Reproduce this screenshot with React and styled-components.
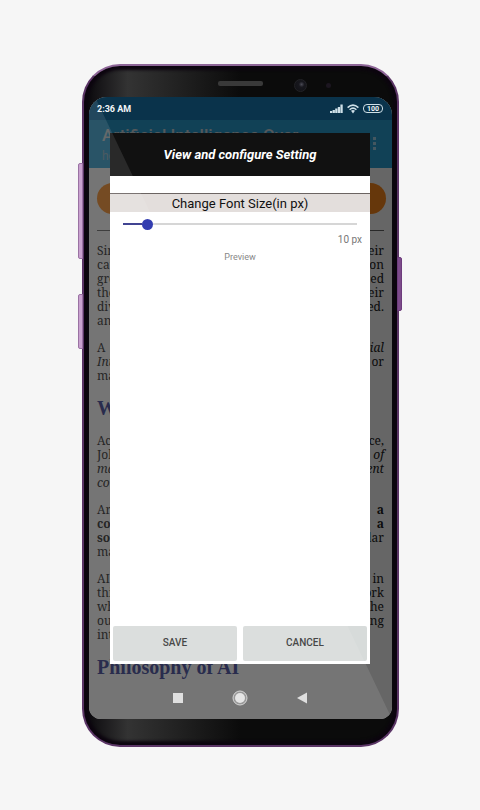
import { useState } from "react";
import styled, { createGlobalStyle, css } from "styled-components";

const GlobalStyle = createGlobalStyle`
  * {
    box-sizing: border-box;
  }

  body {
    margin: 0;
    background: #f6f6f6;
    font-family: Roboto, "Noto Sans", sans-serif;
  }

  button, input {
    font-family: inherit;
  }
`;

// 본문은 줄 단위로 양쪽 정렬
const intro = [
  "Since the invention of computers, their",
  "capability to perform various tasks on",
  "growing. Humans have developed",
  "the power of computer systems, their",
  "diverse working domains, increased.",
  "and reducing size with respect to time.",
];

const App = () => {
  const [fontSize, setFontSize] = useState(10);
  const [isOpen, setIsOpen] = useState(true);

  const onChangeSize = (e) => {
    setFontSize(Number(e.target.value));
  };
  const closeHandler = () => {
    setIsOpen(false);
  };

  return (
    <Page>
      <GlobalStyle />
      <Phone>
        <SideKey $side="left" $top={97} $height={96} />
        <SideKey $side="left" $top={228} $height={55} />
        <SideKey $side="right" $top={191} $height={54} />
        <Forehead>
          <Speaker />
          <Lens />
          <Sensor />
        </Forehead>

        <Screen>
          <StatusBar>
            <span>2:36 AM</span>
            <StatusIcons>
              <SignalIcon />
              <WifiIcon />
              <Battery>100</Battery>
            </StatusIcons>
          </StatusBar>

          <AppBar>
            <div>
              <AppTitle>Artificial Intelligence Over...</AppTitle>
              <AppSubtitle>home</AppSubtitle>
            </div>
            <MoreIcon />
          </AppBar>

          <Article>
            <Pill />
            <Divider />
            <Paragraph>
              {intro.map((line) => (
                <Line key={line}>{line}</Line>
              ))}
            </Paragraph>
            <Paragraph>
              <Line>A branch of Computer Science, <i>Artificial</i></Line>
              <Line><i>Intelligence</i> pursues making computers or</Line>
              <Line>machines as intelligent as human beings.</Line>
            </Paragraph>
            <Heading>What is Artificial Intelligence?</Heading>
            <Paragraph>
              <Line>According to father of the Intelligence,</Line>
              <Line>John McCarthy, <i>"The engineering of</i></Line>
              <Line><i>making machines, more intelligent</i></Line>
              <Line><i>computer programs".</i></Line>
            </Paragraph>
            <Paragraph>
              <Line>Artificial Intelligence is a way of <b>a</b></Line>
              <Line><b>computer, a controlled robot, a</b></Line>
              <Line><b>software</b> think intelligently, similar</Line>
              <Line>manner the intelligent humans think.</Line>
            </Paragraph>
            <Paragraph>
              <Line>AI is accomplished by studying brain in</Line>
              <Line>this how humans learn, decide, work</Line>
              <Line>while solving a problem, then using the</Line>
              <Line>outcomes of study as basis of developing</Line>
              <Line>intelligent software and systems.</Line>
            </Paragraph>
            <Heading>Philosophy of AI</Heading>
          </Article>

          {isOpen && (
            <Backdrop>
              <Dialog role="dialog" aria-labelledby="setting-title">
                <DialogTitle id="setting-title">View and configure Setting</DialogTitle>
                <SectionLabel htmlFor="font-size">Change Font Size(in px)</SectionLabel>
                <Range
                  id="font-size"
                  type="range"
                  min="8"
                  max="32"
                  value={fontSize}
                  onChange={onChangeSize}
                  style={{ "--fill": `${((fontSize - 8) / 24) * 100}%` }}
                />
                <SizeValue htmlFor="font-size">{fontSize} px</SizeValue>
                <Preview>Preview</Preview>
                <Actions>
                  <ActionButton onClick={closeHandler}>SAVE</ActionButton>
                  <ActionButton onClick={closeHandler}>CANCEL</ActionButton>
                </Actions>
              </Dialog>
            </Backdrop>
          )}

          <NavBar>
            <NavButton aria-label="Recent apps">
              <svg width="16" height="16"><rect x="3" y="3" width="10" height="10" fill="#dcdcdc" /></svg>
            </NavButton>
            <NavButton aria-label="Home">
              <svg width="16" height="16">
                <circle cx="8" cy="8" r="7" fill="#8d8d8d" stroke="#d0d0d0" />
                <circle cx="8" cy="8" r="5" fill="#e2e2e2" />
              </svg>
            </NavButton>
            <NavButton aria-label="Back">
              <svg width="16" height="16"><path d="M3 8 L13 2.500 V13.500 Z" fill="#dcdcdc" /></svg>
            </NavButton>
          </NavBar>
          <Glare />
        </Screen>
      </Phone>
    </Page>
  );
};

export default App;

const SignalIcon = () => (
  <svg width="13" height="10" viewBox="0 0 13 10" fill="#cfe0e8">
    <rect x="0" y="7" width="2.300" height="2" />
    <rect x="2.600" y="6" width="2.300" height="3" />
    <rect x="5.200" y="4.500" width="2.300" height="4.500" />
    <rect x="7.800" y="3" width="2.300" height="6" />
    <rect x="10.400" y="0.500" width="2.300" height="8.500" />
  </svg>
);

const WifiIcon = () => (
  <svg width="12" height="10" viewBox="0 0 12 10" fill="none" stroke="#cfe0e8" strokeWidth="1.500">
    <path d="M0.600 3.600 Q6 -1.400 11.400 3.600" />
    <path d="M2.600 5.700 Q6 2.600 9.400 5.700" />
    <path d="M4 6.800 Q6 5.200 8 6.800 L6 9.400 Z" fill="#cfe0e8" stroke="none" />
  </svg>
);

const MoreIcon = () => (
  <svg width="4" height="16" viewBox="0 0 4 16" fill="#fff" opacity="0.6">
    <rect x="0" y="1" width="3" height="3" />
    <rect x="0" y="6" width="3" height="3" />
    <rect x="0" y="11" width="3" height="3" />
  </svg>
);

const Page = styled.main`
  display: flex;
  min-height: 100vh;
  padding: 64px 81px 63px 82px;
`;

const Phone = styled.div`
  position: relative;
  flex: 1;
  display: flex;
  flex-direction: column;
  padding: 0 5px 26px;
  border: 2px solid #5b3566;
  border-top-color: #8d6597;
  border-radius: 38px;
  background: linear-gradient(90deg, #08060a, #333 14%, #262626 26%, #0b0b0b 50%, #0b0b0b);
  box-shadow: inset 0 0 3px 4px #0c050f;
`;

const SideKey = styled.div`
  position: absolute;
  top: ${({ $top }) => $top}px;
  height: ${({ $height }) => $height}px;
  width: 5px;
  border: 1px solid #9a72a3;
  background: #c9a2cf;

  ${({ $side }) =>
    $side === "left"
      ? css`
          left: -6px;
          border-radius: 2px 0 0 2px;
        `
      : css`
          right: -5px;
          border-color: #6d3c7c;
          border-radius: 0 2px 2px 0;
          background: #7d4b8b;
        `};
`;

const Forehead = styled.div`
  position: relative;
  display: flex;
  justify-content: center;
  height: 31px;
  padding-top: 15px;
`;

const Speaker = styled.div`
  width: 45px;
  height: 5px;
  border-radius: 2px;
  background: #393939;
`;

const Lens = styled.div`
  position: absolute;
  top: 13px;
  right: 85px;
  width: 13px;
  height: 13px;
  border: 1px solid #222226;
  border-radius: 50%;
  background: radial-gradient(circle at 60% 40%, #4a4a55, #17171d 30%, #101014);
`;

const Sensor = styled.div`
  position: absolute;
  top: 17px;
  right: 61px;
  width: 5px;
  height: 5px;
  border-radius: 50%;
  background: #1c1620;
`;

const Screen = styled.div`
  position: relative;
  flex: 1;
  display: flex;
  flex-direction: column;
  overflow: hidden;
  border-radius: 18px 18px 12px 12px;
  background: #fff;
`;

const StatusBar = styled.div`
  position: relative;
  z-index: 2;
  display: flex;
  justify-content: space-between;
  align-items: center;
  height: 23px;
  padding: 0 9px 0 8px;
  background: #0a334b;
  color: #f2f6f8;
  font-size: 9px;
  font-weight: 700;
`;

const StatusIcons = styled.div`
  display: flex;
  align-items: center;
  gap: 4px;
`;

const Battery = styled.span`
  width: 20px;
  height: 9px;
  border: 1px solid #cfe0e8;
  border-radius: 4px;
  font-size: 7px;
  line-height: 8px;
  text-align: center;
`;

const AppBar = styled.header`
  display: flex;
  justify-content: space-between;
  align-items: center;
  height: 48px;
  padding: 0 15px 0 13px;
  background: #2ba3d8;
  color: #d3dde2;
`;

const AppTitle = styled.div`
  font-size: 17px;
  font-weight: 500;
  line-height: 24px;
`;

const AppSubtitle = styled.div`
  color: #8fb4c6;
  font-size: 12px;
  line-height: 18px;
`;

const Article = styled.article`
  display: flex;
  flex-direction: column;
  gap: 13px;
  padding: 15px 8px 0;
  color: #222;
  font-family: "Noto Serif", "DejaVu Serif", serif;
  font-size: 12px;
  line-height: 14px;
`;

const Pill = styled.div`
  height: 31px;
  margin-right: -2px;
  border-radius: 16px;
  background: #ff8a1c;
`;

const Divider = styled.hr`
  width: 100%;
  margin: 3px 0 0;
  border: 0;
  border-top: 1px solid #666;
`;

const Paragraph = styled.p`
  margin: 0;
`;

const Line = styled.span`
  display: block;
  height: 14px;
  white-space: nowrap;
  text-align: justify;

  &:not(:last-child) {
    text-align-last: justify;
  }
`;

const Heading = styled.h2`
  margin: 0;
  color: #2b3590;
  font-family: "Liberation Serif", serif;
  font-size: 20px;
  line-height: 25px;
  white-space: nowrap;
`;

const Backdrop = styled.div`
  position: absolute;
  inset: 0;
  display: flex;
  padding: 36px 22px 55px 21px;
  background: rgba(0, 0, 0, 0.6);
`;

const Dialog = styled.section`
  flex: 1;
  display: flex;
  flex-direction: column;
  background: #fff;
`;

const DialogTitle = styled.h1`
  margin: 0 0 17px;
  padding-top: 1px;
  background: #111;
  color: #fff;
  font-size: 13px;
  font-style: italic;
  font-weight: 700;
  line-height: 42px;
  text-align: center;
`;

const SectionLabel = styled.label`
  padding-top: 1px;
  border-top: 1px solid #6b6462;
  background: #e3dedc;
  color: #111;
  font-size: 13px;
  line-height: 17px;
  text-align: center;
`;

const Range = styled.input`
  appearance: none;
  height: 12px;
  margin: 6px 13px 0;
  background: linear-gradient(90deg, #2c2f86 var(--fill), #d6d6d6 var(--fill)) center / 100% 2px no-repeat;

  &::-webkit-slider-thumb {
    appearance: none;
    width: 11px;
    height: 11px;
    border-radius: 50%;
    background: #1c27a8;
  }
`;

const SizeValue = styled.output`
  margin-top: 4px;
  padding-right: 8px;
  color: #777;
  font-size: 10px;
  line-height: 12px;
  text-align: right;
`;

const Preview = styled.div`
  margin-top: 6px;
  color: #888;
  font-size: 9px;
  line-height: 10px;
  text-align: center;
`;

const Actions = styled.div`
  display: flex;
  gap: 6px;
  margin-top: auto;
  padding: 3px;
`;

const ActionButton = styled.button`
  flex: 1;
  height: 35px;
  padding: 0 0 2px;
  border: 0;
  border-radius: 2px;
  background: #d7dbda;
  color: #333;
  font-size: 10px;
  font-weight: 500;
  cursor: pointer;
`;

const NavBar = styled.nav`
  position: relative;
  display: flex;
  justify-content: center;
  gap: 46px;
  margin-top: auto;
  padding: 0 2px 13px 0;
`;

const NavButton = styled.button`
  display: flex;
  padding: 0;
  border: 0;
  background: none;
`;

// 왼쪽 아래를 밝게 덮는 유리 반사
const Glare = styled.div`
  position: absolute;
  inset: 0;
  z-index: 3;
  background: rgba(255, 255, 255, 0.1);
  clip-path: polygon(0 0, 2% 0, 100% 100%, 0 100%);
  pointer-events: none;
`;
